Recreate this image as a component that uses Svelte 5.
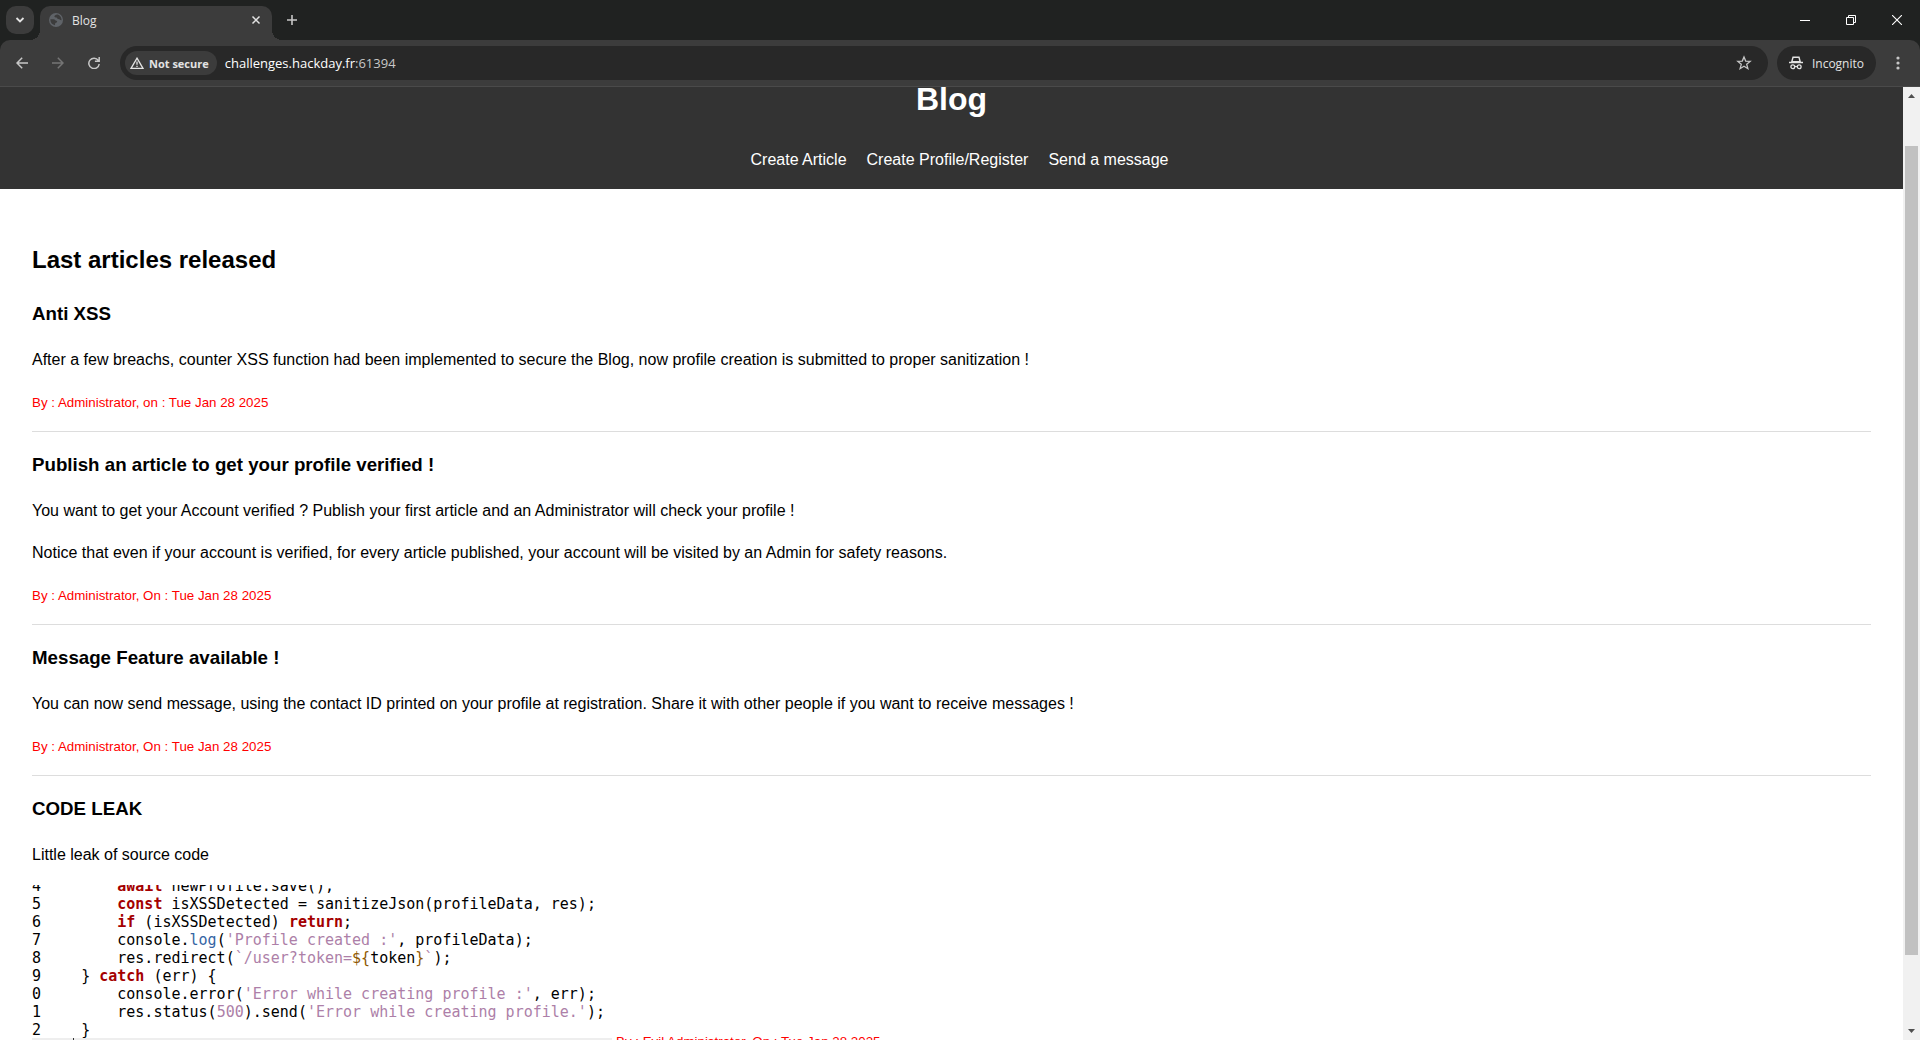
<script>
  const links = ['Create Article', 'Create Profile/Register', 'Send a message'];

  const articles = [
    {
      title: 'Anti XSS',
      body: [
        'After a few breachs, counter XSS function had been implemented to secure the Blog, now profile creation is submitted to proper sanitization !'
      ],
      by: 'By : Administrator, on : Tue Jan 28 2025'
    },
    {
      title: 'Publish an article to get your profile verified !',
      body: [
        'You want to get your Account verified ? Publish your first article and an Administrator will check your profile !',
        'Notice that even if your account is verified, for every article published, your account will be visited by an Admin for safety reasons.'
      ],
      by: 'By : Administrator, On : Tue Jan 28 2025'
    },
    {
      title: 'Message Feature available !',
      body: [
        'You can now send message, using the contact ID printed on your profile at registration. Share it with other people if you want to receive messages !'
      ],
      by: 'By : Administrator, On : Tue Jan 28 2025'
    }
  ];

  // Each line: gutter digit followed by [text, token class] pairs.
  const code = [
    ['4', [['        '], ['await', 'kw'], [' newProfile.save();']]],
    ['5', [['        '], ['const', 'kw'], [' isXSSDetected = sanitizeJson(profileData, res);']]],
    ['6', [['        '], ['if', 'kw'], [' (isXSSDetected) '], ['return', 'kw'], [';']]],
    ['7', [['        console.'], ['log', 'fn'], ['('], ["'Profile created :'", 'str'], [', profileData);']]],
    ['8', [['        res.redirect('], ['`/user?token=', 'str'], ['${', 'tpl'], ['token'], ['}', 'tpl'], ['`', 'str'], [');']]],
    ['9', [['    } '], ['catch', 'kw'], [' (err) {']]],
    ['0', [['        console.error('], ["'Error while creating profile :'", 'str'], [', err);']]],
    ['1', [['        res.status('], ['500', 'str'], [').send('], ["'Error while creating profile.'", 'str'], [');']]],
    ['2', [['    }']]]
  ];
</script>

<div class="window">
  <div class="tabstrip">
    <button class="search" aria-label="Search tabs">
      <svg width="10" height="10" viewBox="0 0 10 10"><path d="M1.500 3 5 6.500 8.500 3" fill="none" stroke="#e3e3e3" stroke-width="1.800" /></svg>
    </button>
    <div class="tab">
      <svg width="14" height="14" viewBox="0 0 14 14">
        <circle cx="7" cy="7" r="7" fill="#5f6368" />
        <path d="M1.400 6.200h3.200c1.500 0 1.500 1.600 2.800 1.600 1 0 1 1.400.2 1.600-1.300.3-1.600.5-1.600 2.800C3.200 11.800 1.400 9.500 1.400 7ZM8 1.500c-1.200.3-2.600 1-2.600 2 0 .9 1.300.9 2 .9.900 0 .8 1.700 2 1.700s1.200 1.100 3.200 1.100C12.600 4 10.500 1.500 8 1.500Z" fill="#3c3c3c" />
      </svg>
      <span>Blog</span>
      <button class="bare" aria-label="Close tab">
        <svg width="10" height="10" viewBox="0 0 10 10"><path d="m1.500 1.500 7 7m0-7-7 7" stroke="#e3e3e3" stroke-width="1.500" /></svg>
      </button>
    </div>
    <button class="bare new" aria-label="New tab">
      <svg width="12" height="12" viewBox="0 0 12 12"><path d="M6 1v10M1 6h10" stroke="#c7c7c7" stroke-width="1.600" /></svg>
    </button>
    <div class="controls">
      <button class="bare" aria-label="Minimize"><svg width="10" height="10" viewBox="0 0 10 10"><path d="M0 5.500h10" stroke="#fff" /></svg></button>
      <button class="bare" aria-label="Restore"><svg width="10" height="10" viewBox="0 0 10 10"><path d="M.5 2.500h7v7h-7ZM2.500 2.500v-2h7v7h-2" fill="none" stroke="#fff" /></svg></button>
      <button class="bare" aria-label="Close"><svg width="10" height="10" viewBox="0 0 10 10"><path d="m0 0 10 10M10 0 0 10" stroke="#fff" stroke-width="1.100" /></svg></button>
    </div>
  </div>

  <div class="toolbar">
    <button class="bare nav" aria-label="Back">
      <svg width="12" height="12" viewBox="0 0 12 12"><path d="M12 6H1.200M6.200.8 1 6l5.200 5.200" fill="none" stroke="#c7c7c7" stroke-width="1.500" /></svg>
    </button>
    <button class="bare nav" aria-label="Forward" disabled>
      <svg width="12" height="12" viewBox="0 0 12 12"><path d="M0 6h10.800M5.800.8 11 6l-5.200 5.200" fill="none" stroke="#757575" stroke-width="1.500" /></svg>
    </button>
    <button class="bare nav" aria-label="Reload">
      <svg width="12" height="12" viewBox="0 0 12 12"><path d="M10.300 3.400A5.200 5.200 0 1 0 11.200 7M11.200 0v4.300H6.900" fill="none" stroke="#c7c7c7" stroke-width="1.500" /></svg>
    </button>
    <div class="omnibox">
      <button class="chip">
        <svg width="14" height="12" viewBox="0 0 14 12"><path d="M7 1.200 13 11.400H1Z" fill="none" stroke="#e3e3e3" stroke-width="1.300" /><path d="M7 4.500v3.300M7 8.700v1.400" stroke="#e3e3e3" stroke-width="1.300" /></svg>
        Not secure
      </button>
      <div class="url">challenges.hackday.fr<span>:61394</span></div>
      <button class="bare star" aria-label="Bookmark this tab">
        <svg width="16" height="16" viewBox="0 0 16 16"><path d="m8 1.900 1.700 4.200 4.500.3-3.500 2.900 1.200 4.400L8 11.300l-3.900 2.400 1.200-4.400-3.500-2.900 4.500-.3Z" fill="none" stroke="#c7c7c7" stroke-width="1.300" /></svg>
      </button>
    </div>
    <button class="incognito">
      <svg width="14" height="14" viewBox="0 0 14 14">
        <path d="M4 1.200h6l1.200 4.600H2.800Z" fill="none" stroke="#e3e3e3" stroke-width="1.400" />
        <path d="M0 6.500h14" stroke="#e3e3e3" stroke-width="1.500" />
        <circle cx="3.800" cy="10.800" r="1.900" fill="none" stroke="#e3e3e3" stroke-width="1.300" />
        <circle cx="10.200" cy="10.800" r="1.900" fill="none" stroke="#e3e3e3" stroke-width="1.300" />
        <path d="M5.700 10.500h2.600" stroke="#e3e3e3" stroke-width="1.200" />
      </svg>
      Incognito
    </button>
    <button class="bare more" aria-label="Menu">
      <svg width="4" height="14" viewBox="0 0 4 14" fill="#c7c7c7"><circle cx="2" cy="2" r="1.600" /><circle cx="2" cy="7" r="1.600" /><circle cx="2" cy="12" r="1.600" /></svg>
    </button>
  </div>

  <div class="viewport">
    <div class="page">
      <header>
        <h1>Blog</h1>
        <nav>
          {#each links as link}
            <a href="#top">{link}</a>
          {/each}
        </nav>
      </header>
      <main>
        <h2>Last articles released</h2>
        {#each articles as article}
          <article>
            <h3>{article.title}</h3>
            {#each article.body as text}
              <p>{text}</p>
            {/each}
            <p class="by"><small>{article.by}</small></p>
          </article>
        {/each}
        <article>
          <h3>CODE LEAK</h3>
          <p>Little leak of source code</p>
          <div class="leak">
            <div class="shot">
              <pre>{#each code as [num, parts]}<span class="line"><span>{num}</span><span>{#each parts as [text, kind]}<span class={kind}>{text}</span>{/each}</span></span>{/each}</pre>
              <div class="strip"></div>
            </div>
            <p class="by"><small>By : Evil Administrator, On : Tue Jan 28 2025</small></p>
          </div>
        </article>
      </main>
    </div>
    <div class="scrollbar">
      <svg width="17" height="17" viewBox="0 0 17 17"><path d="M5 11h7L8.500 7Z" fill="#505050" /></svg>
      <div class="before"></div>
      <div class="thumb"></div>
      <div class="after"></div>
      <svg width="17" height="17" viewBox="0 0 17 17"><path d="M5 6h7l-3.500 4Z" fill="#505050" /></svg>
    </div>
  </div>
</div>

<style>
  :global(body) {
    margin: 0;
    background: #fff;
  }
  .window {
    display: flex;
    flex-direction: column;
    height: 100vh;
    overflow: hidden;
    background: #202221;
    font-family: 'Liberation Sans', Arial, sans-serif;
    color: #000;
  }
  button {
    display: flex;
    align-items: center;
    justify-content: center;
    border: 0;
    padding: 0;
    color: #e3e3e3;
    font: 12px 'Open Sans', 'Noto Sans', sans-serif;
  }
  .bare {
    background: none;
  }

  /* Tab strip */
  .tabstrip {
    display: flex;
    align-items: center;
    flex: none;
    height: 40px;
    padding-left: 6px;
  }
  .search {
    width: 28px;
    height: 28px;
    border-radius: 10px;
    background: #3c3c3c;
  }
  .tab {
    position: relative;
    display: flex;
    align-items: center;
    align-self: flex-end;
    box-sizing: border-box;
    width: 232px;
    height: 34px;
    margin-left: 6px;
    padding: 0 11px 6px 9px;
    gap: 9px;
    border-radius: 10px 10px 0 0;
    background: #3c3c3c;
    color: #e3e3e3;
    font: 12px 'Open Sans', 'Noto Sans', sans-serif;
  }
  .tab::before,
  .tab::after {
    content: '';
    position: absolute;
    bottom: 0;
    width: 10px;
    height: 10px;
  }
  .tab::before {
    right: 100%;
    background: radial-gradient(circle at 0 0, transparent 10px, #3c3c3c 10px);
  }
  .tab::after {
    left: 100%;
    background: radial-gradient(circle at 100% 0, transparent 10px, #3c3c3c 10px);
  }
  .tab span {
    flex: 1;
  }
  .new {
    width: 28px;
    height: 28px;
    margin-left: 6px;
  }
  .controls {
    display: flex;
    margin-left: auto;
  }
  .controls button {
    width: 46px;
    height: 40px;
  }

  /* Toolbar */
  .toolbar {
    display: flex;
    align-items: center;
    flex: none;
    height: 46px;
    padding: 0 8px 0 4px;
    border-bottom: 1px solid #4a4a4a;
    border-radius: 10px 10px 0 0;
    background: #3c3c3c;
  }
  .nav {
    width: 36px;
    height: 34px;
  }
  .omnibox {
    display: flex;
    align-items: center;
    flex: 1;
    height: 34px;
    box-sizing: border-box;
    margin: 0 9px 0 8px;
    padding: 0 16px 0 5px;
    border-radius: 17px;
    background: #282828;
  }
  .chip {
    height: 24px;
    padding: 0 8px 0 5px;
    gap: 5px;
    border-radius: 12px;
    background: #3c3c3c;
    font-size: 11px;
    font-weight: 700;
  }
  .url {
    flex: 1;
    margin-left: 8px;
    color: #fff;
    font: 13px 'Open Sans', 'Noto Sans', sans-serif;
  }
  .url span {
    color: #c7c7c7;
  }
  .incognito {
    height: 34px;
    padding: 0 12px;
    gap: 9px;
    border-radius: 17px;
    background: #282828;
  }
  .more {
    width: 28px;
    height: 34px;
    margin-left: 8px;
  }

  /* Page, scrolled a little way down */
  .viewport {
    display: flex;
    flex: 1;
    min-height: 0;
    overflow: hidden;
    background: #fff;
  }
  .page {
    flex: 1;
    min-width: 0;
    margin-top: -51px;
    font-size: 16px;
    line-height: 26px;
  }
  header {
    display: flow-root;
    padding: 16px;
    background: #333;
    color: #fff;
    text-align: center;
  }
  h1 {
    margin: 21px 0 22px;
    font-size: 32px;
    line-height: 52px;
  }
  nav {
    display: flex;
    justify-content: center;
    gap: 20px;
    padding-left: 16px;
  }
  nav a {
    color: #fff;
    text-decoration: none;
  }
  main {
    display: flow-root;
    padding: 32px;
  }
  h2 {
    margin: 20px 0;
    font-size: 24px;
    line-height: 38px;
  }
  h3 {
    margin: 18px 0;
    line-height: 30px;
  }
  p {
    margin: 16px 0;
  }
  small {
    line-height: 18px;
  }
  article {
    border-bottom: 1px solid #ddd;
  }
  .by {
    color: red;
  }
  .leak {
    display: flex;
    align-items: flex-end;
    gap: 4px;
    margin-top: 17px;
  }
  .leak .by {
    margin: 0;
  }
  .shot {
    display: flex;
    flex-direction: column;
    justify-content: flex-end;
    width: 580px;
    height: 161px;
    margin-bottom: 8px;
    overflow: hidden;
  }
  pre {
    margin: 0;
    font: 15px/18px 'DejaVu Sans Mono', monospace;
  }
  .line {
    display: flex;
    gap: 4px;
  }
  .strip {
    flex: none;
    height: 8px;
    margin-top: -1px;
    padding-left: 41px;
    background: #eee;
  }
  .strip::before {
    content: '';
    display: block;
    width: 1px;
    height: 2px;
    background: #333;
  }
  .kw {
    color: #a40000;
    font-weight: bold;
  }
  .fn {
    color: #3465a4;
  }
  .str {
    color: #ad7fa8;
  }
  .tpl {
    color: #8f5902;
  }

  /* Scrollbar */
  .scrollbar {
    display: flex;
    flex-direction: column;
    flex: none;
    width: 17px;
    background: #f1f1f1;
  }
  .scrollbar svg {
    flex: none;
  }
  .before {
    flex: 42;
  }
  .thumb {
    flex: 809;
    margin: 0 2px;
    background: #c1c1c1;
  }
  .after {
    flex: 68;
  }
</style>
